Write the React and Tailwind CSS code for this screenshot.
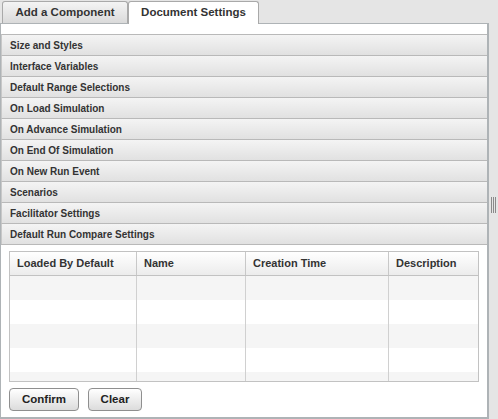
import React from "react";

const sections = [
  "Size and Styles",
  "Interface Variables",
  "Default Range Selections",
  "On Load Simulation",
  "On Advance Simulation",
  "On End Of Simulation",
  "On New Run Event",
  "Scenarios",
  "Facilitator Settings",
  "Default Run Compare Settings",
];

const columns = [
  { name: "Loaded By Default", w: "w-[127px]" },
  { name: "Name", w: "w-[109px]" },
  { name: "Creation Time", w: "w-[143px]" },
  { name: "Description", w: "flex-1" },
];

const App = () => {
  return (
    <div className="relative w-[498px] h-[419px] bg-[#e5e5e5] overflow-hidden font-['Liberation_Sans',Arial,sans-serif] text-[#333]">
      {/* Tabs */}
      <div className="flex items-end h-[24px] pl-[2px] relative z-10">
        <div className="h-[22px] w-[126px] mb-[1px] flex items-center justify-center text-[11.5px] font-bold border border-[#a9a9a9] border-b-0 rounded-t-[3px] bg-linear-to-b from-[#f4f4f4] to-[#dadada]">
          Add a Component
        </div>
        <div className="h-[23px] w-[131px] flex items-center justify-center text-[11.5px] font-bold border border-[#a9a9a9] border-b-0 rounded-t-[3px] bg-white">
          Document Settings
        </div>
      </div>

      {/* Panel */}
      <div className="-mt-[1px] w-[489px] h-[396px] bg-white border-l border-t border-[#aeb3b6] border-r-2 border-b-2 flex flex-col">
        <div className="h-[10px]" />
        <div className="flex flex-col border-b border-[#b9b9b9]">
          {sections.map((s) => (
            <div
              key={s}
              className="h-[21px] border-t border-[#b9b9b9] border-l border-l-[#c8c8c8] bg-linear-to-b from-[#f4f4f4] to-[#e1e1e1] flex items-center pl-[8px] text-[10px] font-bold"
            >
              {s}
            </div>
          ))}
        </div>

        {/* Content */}
        <div className="px-[8px] pt-[6px] flex flex-col">
          <div className="border border-[#c2c2c2] h-[131px] flex flex-col overflow-hidden">
            <div className="h-[24px] flex border-b border-[#c2c2c2] bg-linear-to-b from-white to-[#ececec] shrink-0">
              {columns.map((c, i) => (
                <div
                  key={c.name}
                  className={`${c.w} flex items-center pl-[7px] text-[11px] font-bold ${
                    i < columns.length - 1 ? "border-r border-[#c8c8c8]" : ""
                  }`}
                >
                  {c.name}
                </div>
              ))}
            </div>
            <div className="flex-1 relative overflow-hidden">
              {[0, 1, 2, 3, 4].map((r) => (
                <div
                  key={r}
                  className={`h-[24px] flex ${r % 2 === 0 ? "bg-[#f5f5f5]" : "bg-white"}`}
                >
                  {columns.map((c, i) => (
                    <div
                      key={c.name}
                      className={`${c.w} h-full ${
                        i < columns.length - 1 ? "border-r border-[#d0d0d0]" : ""
                      }`}
                    />
                  ))}
                </div>
              ))}
            </div>
          </div>

          <div className="flex gap-[9px] mt-[6px]">
            <button className="w-[70px] h-[23px] rounded-[4px] border border-[#8f8f8f] bg-linear-to-b from-white to-[#dcdcdc] text-[11.5px] font-bold text-[#222]">
              Confirm
            </button>
            <button className="w-[54px] h-[23px] rounded-[4px] border border-[#8f8f8f] bg-linear-to-b from-white to-[#dcdcdc] text-[11.5px] font-bold text-[#222]">
              Clear
            </button>
          </div>
        </div>
      </div>

      {/* Splitter grip */}
      <div className="absolute left-[491px] top-[197px] h-[16px] flex gap-[1px]">
        <div className="w-[1px] h-full bg-[#8a8a8a]" />
        <div className="w-[1px] h-full bg-[#8a8a8a]" />
        <div className="w-[1px] h-full bg-[#8a8a8a]" />
      </div>
    </div>
  );
};

export default App;
